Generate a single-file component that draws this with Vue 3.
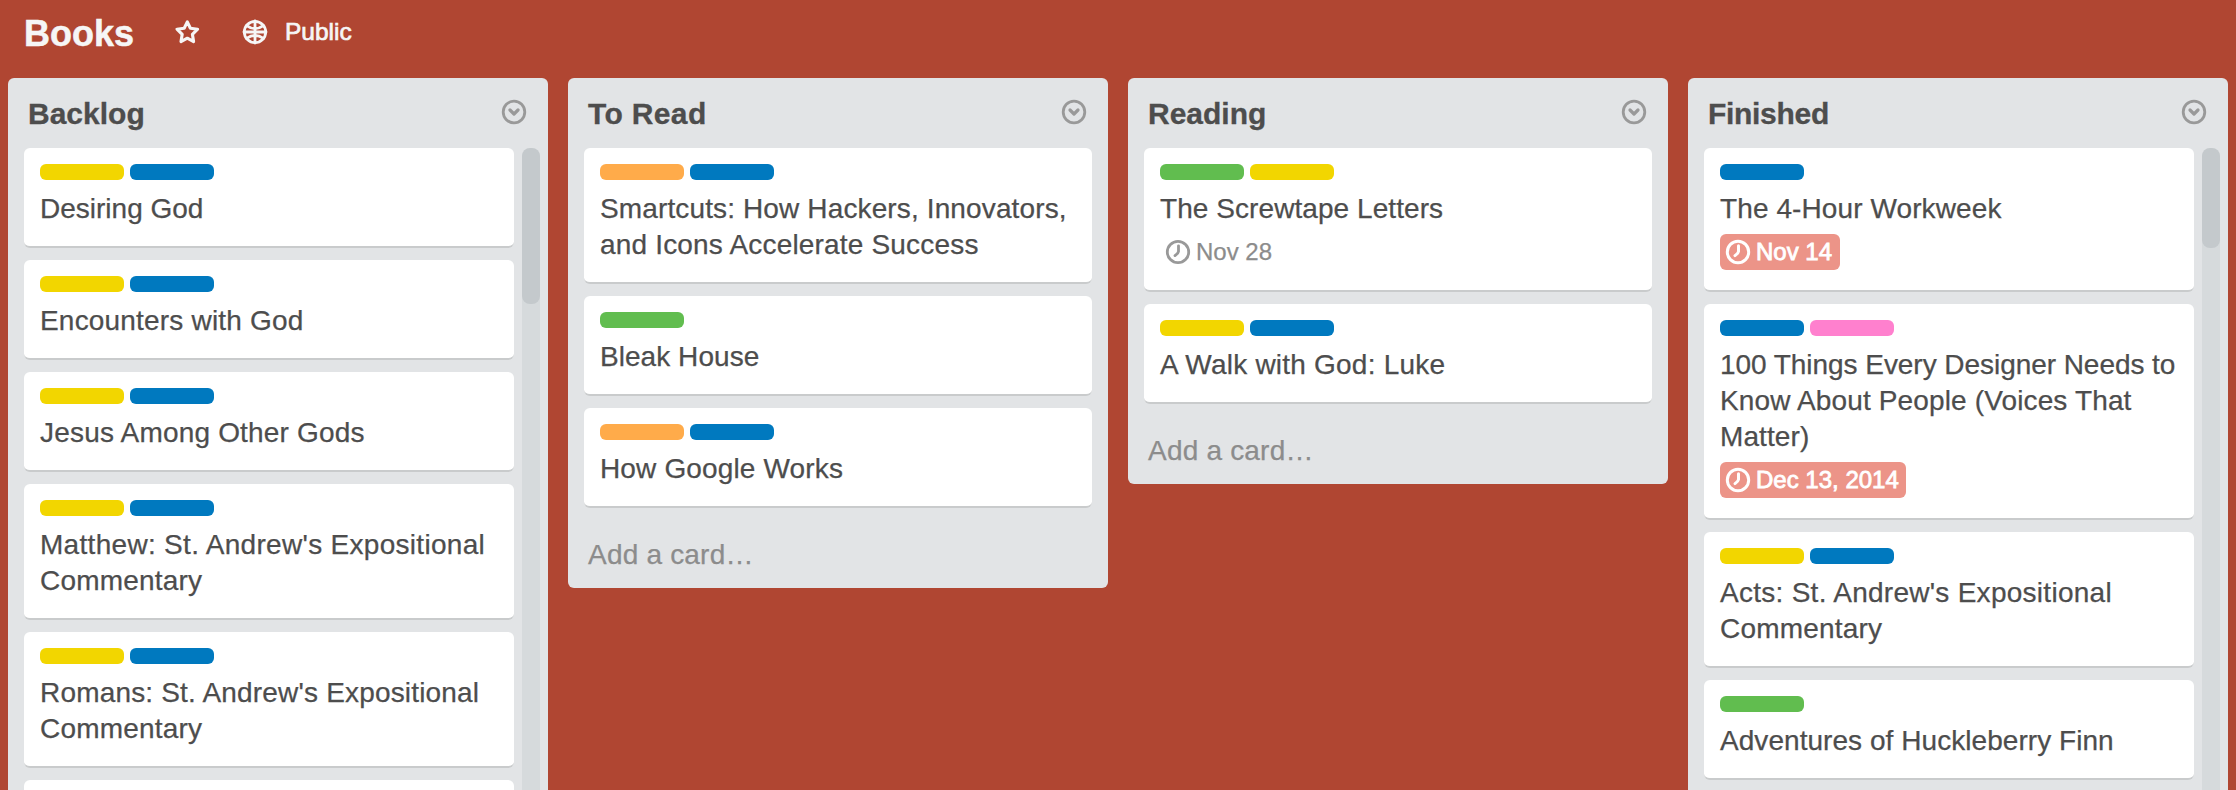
<script setup>
// Each title line is [text, letter spacing in px].
const lists = [
  {
    title: 'Backlog',
    thumb: 'long',
    cards: [
      { labels: ['yellow', 'blue'], lines: [['Desiring God', 0]] },
      { labels: ['yellow', 'blue'], lines: [['Encounters with God', 0.19]] },
      { labels: ['yellow', 'blue'], lines: [['Jesus Among Other Gods', 0.19]] },
      { labels: ['yellow', 'blue'], lines: [["Matthew: St. Andrew's Expositional", 0.3], ['Commentary', 0.2]] },
      { labels: ['yellow', 'blue'], lines: [["Romans: St. Andrew's Expositional", 0.18], ['Commentary', 0.2]] },
      { labels: [], lines: [] },
    ],
  },
  {
    title: 'To Read',
    tracking: 0.35,
    cards: [
      {
        labels: ['orange', 'blue'],
        lines: [['Smartcuts: How Hackers, Innovators,', 0.13], ['and Icons Accelerate Success', 0.18]],
      },
      { labels: ['green'], lines: [['Bleak House', 0.05]] },
      { labels: ['orange', 'blue'], lines: [['How Google Works', 0.15]] },
    ],
  },
  {
    title: 'Reading',
    tracking: 0,
    cards: [
      { labels: ['green', 'yellow'], lines: [['The Screwtape Letters', 0.07]], due: 'Nov 28' },
      { labels: ['yellow', 'blue'], lines: [['A Walk with God: Luke', 0.22]] },
    ],
  },
  {
    title: 'Finished',
    tracking: -0.3,
    thumb: 'short',
    cards: [
      { labels: ['blue'], lines: [['The 4-Hour Workweek', 0.1]], due: 'Nov 14', past: true },
      {
        labels: ['blue', 'pink'],
        lines: [
          ['100 Things Every Designer Needs to', -0.05],
          ['Know About People (Voices That', 0.14],
          ['Matter)', 0.1],
        ],
        due: 'Dec 13, 2014',
        past: true,
      },
      { labels: ['yellow', 'blue'], lines: [["Acts: St. Andrew's Expositional", 0.27], ['Commentary', 0.2]] },
      { labels: ['green'], lines: [['Adventures of Huckleberry Finn', 0.05]] },
    ],
  },
]

const spacing = (px) => ({ letterSpacing: `${px || 0}px` })
</script>

<template>
  <div class="board">
    <header class="board-header">
      <h1 class="board-name">Books</h1>
      <svg class="star" viewBox="0 0 26 26">
        <path d="M13.3 2.9 16.4 9.3 23.6 10.2 18.4 15.3 19.6 22.6 13.3 19.2 7 22.6 8.2 15.3 3 10.2 10.2 9.3Z" />
      </svg>
      <svg class="globe" viewBox="0 0 26 26">
        <circle cx="13" cy="13" r="10.7" />
        <path d="M13 2V24M2 13H24M4.6 6.6Q13 12.6 21.4 6.6M4.6 19.4Q13 13.4 21.4 19.4" />
      </svg>
      <span class="visibility">Public</span>
    </header>

    <main class="lists">
      <section v-for="list in lists" :key="list.title" class="list" :class="{ full: list.thumb }">
        <div class="list-header">
          <h2 :style="spacing(list.tracking)">{{ list.title }}</h2>
          <svg class="menu" viewBox="0 0 26 26">
            <circle cx="13" cy="13" r="10.8" />
            <path d="M9 11 13 15 17 11" />
          </svg>
        </div>
        <div class="list-body">
          <div class="cards">
            <article v-for="(card, i) in list.cards" :key="i" class="card">
              <div class="labels">
                <span v-for="label in card.labels" :key="label" class="label" :class="label"></span>
              </div>
              <div class="card-title">
                <div v-for="[text, px] in card.lines" :key="text" :style="spacing(px)">{{ text }}</div>
              </div>
              <div v-if="card.due" class="badge" :class="{ past: card.past }">
                <svg class="clock" viewBox="0 0 26 26">
                  <circle cx="13" cy="13" r="10.7" />
                  <path d="M13.5 6.8V12.4Q13.2 14.2 10 16.6" />
                </svg>
                <span>{{ card.due }}</span>
              </div>
            </article>
          </div>
          <div v-if="list.thumb" class="track">
            <div class="thumb" :class="list.thumb"></div>
          </div>
        </div>
        <div v-if="!list.thumb" class="add">Add a card…</div>
      </section>
    </main>
  </div>
</template>

<style>
body {
  margin: 0;
  overflow: hidden;
}
</style>

<style scoped>
.board {
  display: flex;
  flex-direction: column;
  width: 2236px;
  height: 790px;
  overflow: hidden;
  background: #b04632;
  color: #4d4d4d;
  font-family: "Liberation Sans", Arial, sans-serif;
}
svg {
  flex: none;
  width: 26px;
  height: 26px;
  fill: none;
  stroke-width: 2.8;
  stroke-linecap: round;
  stroke-linejoin: round;
}
.board-header {
  flex: none;
  display: flex;
  align-items: center;
  box-sizing: border-box;
  height: 78px;
  padding: 0 0 15px 24px;
  color: #f6f6f6;
}
.board-header svg {
  stroke: #f6f6f6;
}
.board-name {
  width: 150px;
  margin: 4px 0 0;
  font-size: 36px;
  line-height: 42px;
  font-weight: 700;
  -webkit-text-stroke: 0.5px;
}
.star {
  stroke-width: 3.1;
}
.globe {
  margin-left: 42px;
}
.visibility {
  margin-left: 17px;
  font-size: 24.5px;
  line-height: 30px;
  -webkit-text-stroke: 0.7px;
}
.lists {
  flex: 1;
  min-height: 0;
  display: flex;
  align-items: flex-start;
  gap: 20px;
  padding-left: 8px;
}
.list {
  flex: none;
  box-sizing: border-box;
  width: 540px;
  padding: 0 16px;
  border-radius: 6px;
  background: #e2e4e6;
}
.list.full {
  height: 730px;
  padding-right: 8px;
}
.list-header {
  display: flex;
  justify-content: space-between;
  box-sizing: border-box;
  height: 70px;
  padding: 18px 5px 0 4px;
}
.full .list-header {
  padding-right: 13px;
}
.list-header h2 {
  margin: 0;
  font-size: 30px;
  line-height: 36px;
  font-weight: 700;
  -webkit-text-stroke: 0.3px;
}
.menu {
  margin-top: 2.5px;
  stroke: #999;
}
.menu path {
  stroke-width: 3.2;
}
.list-body {
  display: flex;
  gap: 8px;
}
.cards {
  flex: 1;
  display: flex;
  flex-direction: column;
  gap: 12px;
}
.card {
  box-sizing: border-box;
  min-height: 100px;
  padding: 16px 16px 20px;
  border-bottom: 2px solid #c9cbcc;
  border-radius: 6px;
  background: #fff;
}
.labels {
  display: flex;
  gap: 6px;
  height: 16px;
  margin-bottom: 11px;
}
.label {
  width: 84px;
  border-radius: 6px;
}
.yellow { background: #f2d600; }
.blue { background: #0079bf; }
.orange { background: #ffab4a; }
.green { background: #61bd4f; }
.pink { background: #ff80ce; }
.card-title {
  margin-bottom: -1px;
  font-size: 28px;
  line-height: 36px;
  white-space: nowrap;
  -webkit-text-stroke: 0.25px;
}
.badge {
  display: flex;
  align-items: center;
  gap: 5px;
  box-sizing: border-box;
  width: max-content;
  height: 36px;
  margin-top: 8px;
  padding: 0 7.5px 0 5px;
  border-radius: 6px;
  color: #8c8c8c;
  font-size: 24px;
  line-height: 36px;
  -webkit-text-stroke: 0.25px;
}
.badge svg {
  margin-top: -1px;
  stroke: #999;
}
.badge.past {
  background: #ec9488;
  color: #fff;
  -webkit-text-stroke: 0.8px;
}
.badge.past svg {
  stroke: #fff;
  stroke-width: 3;
}
.track {
  width: 18px;
  height: 660px;
  border-radius: 9px;
  background: #d6dadc;
}
.thumb {
  border-radius: 8px;
  background: #c4c9cc;
}
.thumb.long {
  height: 156px;
}
.thumb.short {
  height: 100px;
}
.add {
  padding: 29px 4px 15px;
  color: #8c8c8c;
  font-size: 28px;
  line-height: 36px;
  letter-spacing: 0.2px;
  -webkit-text-stroke: 0.25px;
}
</style>
